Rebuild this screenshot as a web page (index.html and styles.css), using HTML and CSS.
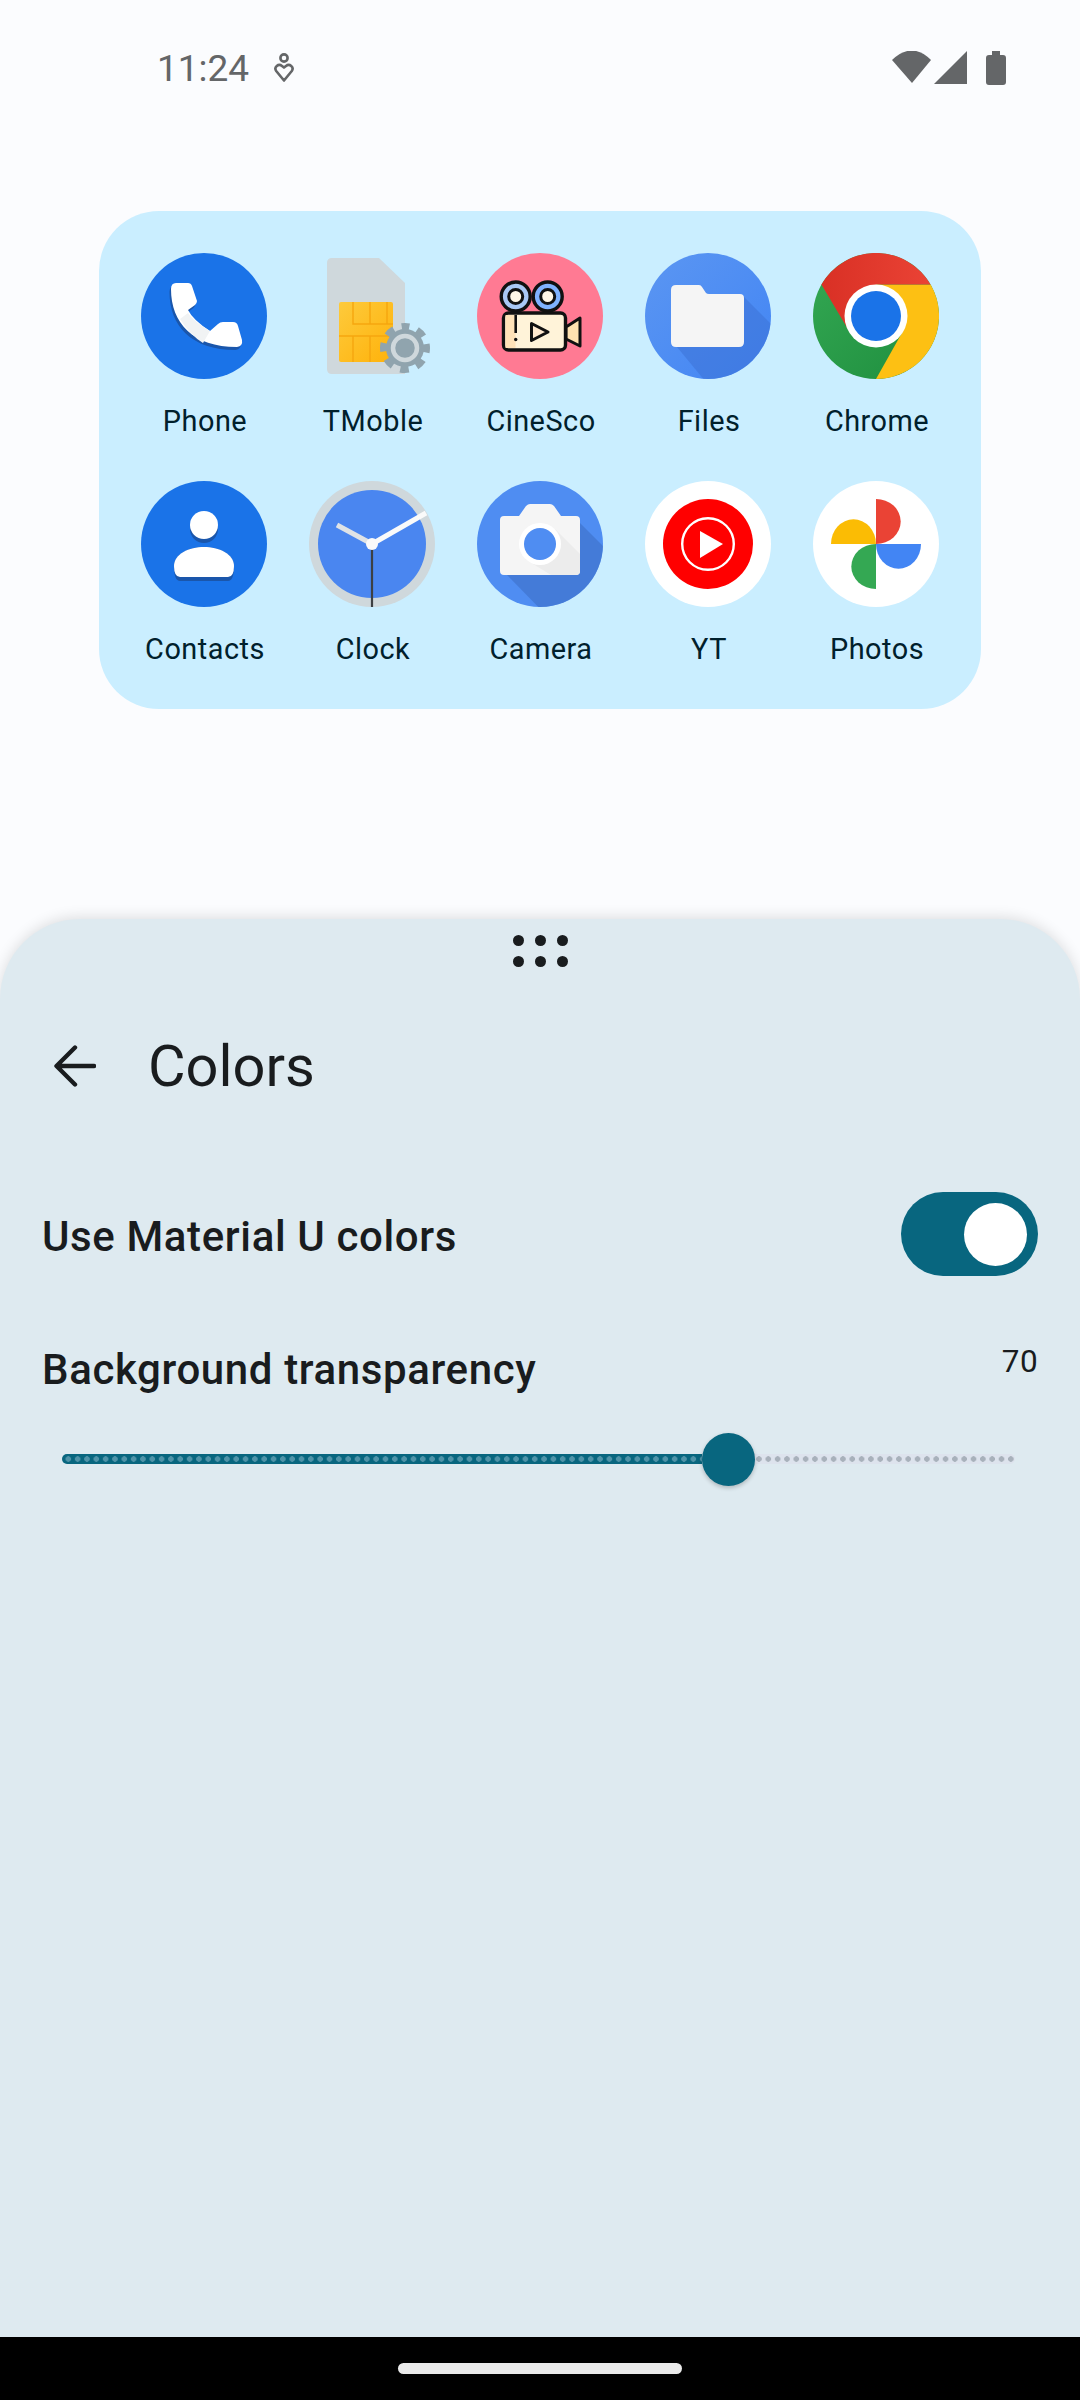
FILE: index.html
```html
<!DOCTYPE html>
<html lang="en">
<head>
<meta charset="utf-8">
<title>Colors</title>
<link rel="stylesheet" href="styles.css">
</head>
<body>
<div class="screen">
  <header class="status">
    <span class="time">11:24</span>
    <svg class="wellbeing" width="22" height="30" viewBox="0 0 22 30"><circle cx="11" cy="5" r="3.6" fill="none" stroke="#646668" stroke-width="2.6"/><path d="M11 27.5 L3.2 18 C0.6 14.2 5.4 10.2 9 13 L11 14.6 L13 13 C16.6 10.2 21.4 14.2 18.8 18 Z" fill="none" stroke="#646668" stroke-width="2.6" stroke-linejoin="round"/></svg>
    <div class="status-right">
      <svg width="114" height="34" viewBox="892 51 114 34" fill="#646668">
        <path d="M892 60 Q912 41 931 60 L912 83 Z"/>
        <path d="M934 84 L967 51 V84 Z"/>
        <path d="M992 51 H1000 V55 H1003 Q1006 55 1006 58 V82 Q1006 85 1003 85 H989 Q986 85 986 82 V58 Q986 55 989 55 H992 Z"/>
      </svg>
    </div>
  </header>

  <section class="home">
    <div class="folder">
      <div class="app">
        <svg class="icon" viewBox="0 0 126 126">
          <circle cx="63" cy="63" r="63" fill="#1a73e8"/>
          <path transform="translate(-1.500 3)" fill="#1a56ab" d="M35 30H47Q50 30 51 33L56 48Q56 50 54 52L47 57Q52 67 69 78L77 71Q79 69 82 69H92Q96 69 97 73L101 87Q102 93 96 94C52 94 30 70 30 36Q30 30 35 30Z"/>
          <path fill="#fff" d="M35 30H47Q50 30 51 33L56 48Q56 50 54 52L47 57Q52 67 69 78L77 71Q79 69 82 69H92Q96 69 97 73L101 87Q102 93 96 94C52 94 30 70 30 36Q30 30 35 30Z"/>
          <path fill="#f1f3f4" d="M39 66L47 60Q52 68 69 78L62 90Q49 82 39 66Z"/>
        </svg>
        <span class="label">Phone</span>
      </div>
      <div class="app">
        <svg class="icon" viewBox="0 0 126 126">
          <defs><linearGradient id="chip" x1="0" y1="0" x2="1" y2="1"><stop offset="0" stop-color="#fdca3c"/><stop offset="1" stop-color="#ffb20a"/></linearGradient></defs>
          <path fill="#cfd8dc" d="M23 5H70L96 30V121H23Q18 121 18 116V10Q18 5 23 5Z"/>
          <rect x="30" y="49" width="54" height="60" rx="2" fill="url(#chip)"/>
          <path fill="none" stroke="#f6a60f" stroke-width="1.4" d="M44 49V71H84M61 49V71M78 49V71M30 83H84M44 83V109M61 83V109"/>
          <circle cx="96" cy="95" r="19" fill="#90a4ae"/>
          <circle cx="96" cy="95" r="21" fill="none" stroke="#90a4ae" stroke-width="8" stroke-dasharray="8.5 8" stroke-dashoffset="4.2" transform="rotate(-90 96 95)"/>
          <circle cx="96" cy="95" r="12" fill="none" stroke="#cfd8dc" stroke-width="4.5"/>
        </svg>
        <span class="label">TMoble</span>
      </div>
      <div class="app">
        <svg class="icon" viewBox="0 0 126 126">
          <circle cx="63" cy="63" r="63" fill="#ff7a93"/>
          <circle cx="38.700" cy="43.500" r="14.500" fill="#a9c8f5" stroke="#111" stroke-width="3.400"/>
          <circle cx="70.700" cy="43.500" r="14.500" fill="#7fb2ff" stroke="#111" stroke-width="3.400"/>
          <circle cx="38.700" cy="43.500" r="7" fill="#fff6e6" stroke="#111" stroke-width="3"/>
          <circle cx="70.700" cy="43.500" r="7" fill="#fff6e6" stroke="#111" stroke-width="3"/>
          <path d="M89 74L103 65V93L89 86Z" fill="#ffe2b0" stroke="#111" stroke-width="3" stroke-linejoin="round"/>
          <rect x="26.500" y="60" width="62" height="37" rx="5" fill="#fff3d9" stroke="#111" stroke-width="3.400"/>
          <rect x="28.500" y="62" width="10" height="33" fill="#ffe2b8"/>
          <path d="M38.700 62V80" stroke="#111" stroke-width="2.600"/>
          <circle cx="38.700" cy="86.500" r="1.700" fill="#111"/>
          <path d="M54.500 70.500L71 79L54.500 87.500Z" fill="#ffe9cf" stroke="#111" stroke-width="3" stroke-linejoin="round"/>
        </svg>
        <span class="label">CineSco</span>
      </div>
      <div class="app">
        <svg class="icon" viewBox="0 0 126 126">
          <defs>
            <clipPath id="disc"><circle cx="63" cy="63" r="63"/></clipPath>
            <linearGradient id="filesbg" x1="0" y1="0" x2="1" y2="1"><stop offset="0" stop-color="#5b96f2"/><stop offset="1" stop-color="#4285f4"/></linearGradient>
          </defs>
          <circle cx="63" cy="63" r="63" fill="url(#filesbg)"/>
          <path clip-path="url(#disc)" fill="#3d75d8" opacity=".6" d="M99 44L140 85V140H70L32 94Z"/>
          <path fill="#f5f5f5" d="M31 32H54Q56 32 57 34L61 40Q62 41 64 41H95Q99 41 99 45V89Q99 94 94 94H31Q26 94 26 89V37Q26 32 31 32Z"/>
        </svg>
        <span class="label">Files</span>
      </div>
      <div class="app">
        <svg class="icon" viewBox="0 0 126 126">
          <defs>
            <linearGradient id="cr" x1="0" y1="0" x2="1" y2="0"><stop offset="0" stop-color="#d93025"/><stop offset="1" stop-color="#ea4335"/></linearGradient>
            <linearGradient id="cg" x1="0" y1="0" x2="1" y2="1"><stop offset="0" stop-color="#34a853"/><stop offset="1" stop-color="#1e8e3e"/></linearGradient>
          </defs>
          <circle cx="63" cy="63" r="63" fill="url(#cg)"/>
          <path fill="#fdc013" d="M63 31.500H117.600A63 63 0 0 1 63 126L90 78Z"/>
          <path fill="url(#cr)" d="M8.400 31.500A63 63 0 0 1 117.600 31.500H63L36 78Z"/>
          <circle cx="63" cy="63" r="31.500" fill="#fff"/>
          <circle cx="63" cy="63" r="25" fill="#1a73e8"/>
        </svg>
        <span class="label">Chrome</span>
      </div>

      <div class="app">
        <svg class="icon" viewBox="0 0 126 126">
          <circle cx="63" cy="63" r="63" fill="#1a73e8"/>
          <g fill="#1a56ab">
            <circle cx="63" cy="48" r="14"/>
            <path d="M33 85C33 73 48 66 63 66S93 73 93 85Q93 100 87 100H39Q33 100 33 85Z"/>
          </g>
          <g fill="#fff">
            <circle cx="63" cy="44" r="14"/>
            <path d="M33 85C33 73 48 66 63 66S93 73 93 85Q93 96 87 96H39Q33 96 33 85Z"/>
          </g>
        </svg>
        <span class="label">Contacts</span>
      </div>
      <div class="app">
        <svg class="icon" viewBox="0 0 126 126">
          <circle cx="63" cy="63" r="63" fill="#cfd8dc"/>
          <circle cx="63" cy="63" r="54" fill="#4a86f0"/>
          <path d="M63 63V126" stroke="#3c4043" stroke-width="2.200"/>
          <path d="M63 63L28 44" stroke="#dfe3e6" stroke-width="5"/>
          <path d="M63 63L117 32" stroke="#fafafa" stroke-width="5"/>
          <circle cx="63" cy="63" r="6" fill="#fafafa"/>
        </svg>
        <span class="label">Clock</span>
      </div>
      <div class="app">
        <svg class="icon" viewBox="0 0 126 126">
          <circle cx="63" cy="63" r="63" fill="#4f8df2"/>
          <path clip-path="url(#disc)" fill="#3f72c9" opacity=".65" d="M103 42L145 84V145H80L30 94Z"/>
          <path fill="#f5f5f5" d="M27 35H42L49 25Q51 23 53 23H73Q75 23 77 25L84 35H99Q103 35 103 39V90Q103 94 99 94H27Q23 94 23 90V39Q23 35 27 35Z"/>
          <path fill="#ececec" d="M78 48L103 73V90Q103 94 99 94H74L48 78Z"/>
          <circle cx="63" cy="63" r="21" fill="#fff"/>
          <circle cx="63" cy="63" r="16" fill="#4f8df2"/>
        </svg>
        <span class="label">Camera</span>
      </div>
      <div class="app">
        <svg class="icon" viewBox="0 0 126 126">
          <circle cx="63" cy="63" r="63" fill="#fff"/>
          <circle cx="63" cy="63" r="45" fill="#f00"/>
          <circle cx="63" cy="63" r="25.800" fill="none" stroke="#fff" stroke-width="2.400"/>
          <path d="M55 50L78 63L55 77Z" fill="#fff"/>
        </svg>
        <span class="label">YT</span>
      </div>
      <div class="app">
        <svg class="icon" viewBox="0 0 126 126">
          <circle cx="63" cy="63" r="63" fill="#fff"/>
          <path fill="#ea4335" d="M63 18A24.700 22.500 0 0 1 63 63Z"/>
          <path fill="#4285f4" d="M108 63A22.500 24.700 0 0 1 63 63Z"/>
          <path fill="#34a853" d="M63 108A24.700 22.500 0 0 1 63 63Z"/>
          <path fill="#fbbc04" d="M18 63A22.500 24.700 0 0 1 63 63Z"/>
        </svg>
        <span class="label">Photos</span>
      </div>
    </div>
  </section>

  <section class="sheet">
    <div class="handle">
      <i class="dot"></i><i class="dot"></i><i class="dot"></i>
      <i class="dot"></i><i class="dot"></i><i class="dot"></i>
    </div>
    <div class="topbar">
      <svg class="back" width="42" height="42" viewBox="0 0 42 42"><path d="M21 2.500L2.500 21L21 39.500M3 21H40" fill="none" stroke="#191c1e" stroke-width="4.400" stroke-linecap="round" stroke-linejoin="round"/></svg>
      <h1 class="title">Colors</h1>
    </div>
    <div class="row-switch">
      <span class="setting">Use Material U colors</span>
      <div class="switch"><span class="knob"></span></div>
    </div>
    <div class="row-value">
      <span class="setting">Background transparency</span>
      <span class="value">70</span>
    </div>
    <div class="slider">
      <div class="track-on"></div>
      <div class="track-off"></div>
      <span class="thumb"></span>
    </div>
  </section>

  <footer class="nav"><span class="pill"></span></footer>
</div>
</body>
</html>
```

FILE: styles.css
```css
* { box-sizing: border-box; }
html, body { margin: 0; padding: 0; }
body { font-family: Roboto, "Noto Sans", sans-serif; background: #fbfcfe; }

.screen {
  width: 1080px;
  height: 2400px;
  display: flex;
  flex-direction: column;
  overflow: hidden;
  background: #fbfcfe;
}

.status {
  height: 130px;
  display: flex;
  align-items: flex-start;
  padding: 51px 74px 0 157px;
  color: #646668;
  flex: none;
}
.time { font-size: 37px; line-height: 36px; }
.wellbeing { margin: 2px 0 0 24px; }
.status-right { margin-left: auto; display: flex; }

.home { flex: 1; padding: 81px 0 0 99px; }
.folder {
  width: 882px;
  padding: 21px;
  display: grid;
  grid-template-columns: repeat(5, 168px);
  grid-auto-rows: 228px;
  background: #caeeff;
  border-radius: 60px;
}
.app {
  display: flex;
  flex-direction: column;
  align-items: center;
  padding-top: 21px;
}
.icon { width: 126px; height: 126px; display: block; flex: none; }
.label {
  margin: 24px 0 0 2px;
  font-size: 28.875px;
  line-height: 36px;
  letter-spacing: 0.5px;
  color: #00202c;
  white-space: nowrap;
}

.sheet {
  position: relative;
  flex: none;
  height: 1418px;
  background: #deeaf0;
  border-radius: 80px 80px 0 0;
  box-shadow: 0 -2px 14px rgba(0, 0, 0, 0.12);
  padding-top: 16px;
}
.handle {
  width: 55px;
  margin: 0 auto;
  display: grid;
  grid-template-columns: repeat(3, 11px);
  column-gap: 11px;
  row-gap: 10px;
}
.dot { width: 11px; height: 11px; border-radius: 50%; background: #191c1e; }

.topbar {
  display: flex;
  align-items: center;
  margin-top: 59px;
  padding-left: 54px;
  height: 80px;
}
.back { flex: none; }
.title {
  margin: 0 0 0 52px;
  font-size: 57.75px;
  font-weight: 400;
  line-height: 80px;
  color: #191c1e;
}

.row-switch {
  display: flex;
  align-items: center;
  justify-content: space-between;
  margin-top: 86px;
  padding: 0 42px;
}
.row-switch .setting { margin-top: 6px; }
.setting {
  font-size: 42px;
  font-weight: 500;
  line-height: 56px;
  letter-spacing: 0.62px;
  color: #191c1e;
}
.switch {
  width: 137px;
  height: 84px;
  border-radius: 42px;
  background: #08667f;
  position: relative;
}
.knob {
  position: absolute;
  left: 63px;
  top: 11px;
  width: 63px;
  height: 63px;
  border-radius: 50%;
  background: #fff;
}

.row-value {
  display: flex;
  justify-content: space-between;
  align-items: flex-start;
  margin-top: 66px;
  padding: 0 42px;
}
.value {
  font-size: 31.5px;
  line-height: 40px;
  letter-spacing: 0.4px;
  color: #191c1e;
}

.slider {
  position: relative;
  display: flex;
  margin: 56px 65px 0 62px;
  height: 10px;
}
.track-on {
  width: 640px;
  flex: none;
  border-radius: 5px 0 0 5px;
  background-color: #08667f;
  background-image: radial-gradient(circle, #4f93a8 2.5px, transparent 3px);
  background-size: 9.333px 10px;
  background-position: 1.67px 0;
}
.track-off {
  flex: 1;
  border-radius: 0 5px 5px 0;
  background-color: #dde3ed;
  background-image: radial-gradient(circle, #a8b1bb 2.5px, transparent 3px);
  background-size: 9.333px 10px;
  background-position: -3.67px 0;
}
.thumb {
  position: absolute;
  left: 640px;
  top: -21.5px;
  width: 53px;
  height: 53px;
  border-radius: 50%;
  background: #08667f;
  box-shadow: 0 2px 4px rgba(0, 0, 0, 0.22);
}

.nav {
  flex: none;
  height: 63px;
  background: #000;
  display: flex;
  justify-content: center;
  padding-top: 26px;
}
.pill { width: 284px; height: 11px; border-radius: 6px; background: #eaeaea; }
```
